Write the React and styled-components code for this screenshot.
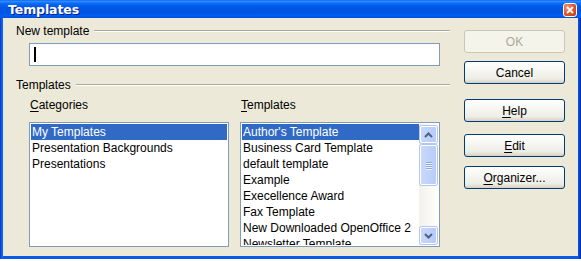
import styled, { createGlobalStyle } from 'styled-components';

const GlobalStyle = createGlobalStyle`
  html, body {
    margin: 0;
    padding: 0;
    background: #ffffff;
  }
  body {
    font-family: "Liberation Sans", Arial, sans-serif;
    font-size: 12px;
  }
`

const Window = styled.div`
  width: 581px;
  height: 259px;
  display: flex;
  flex-direction: column;
  background: linear-gradient(to right, #0831d9 0px, #166aee 2px, #0a5ae8 3px, #0a5ae8 calc(100% - 3px), #0536c4 calc(100% - 1px), #002a9e 100%);
  box-sizing: border-box;
`

const TitleBar = styled.div`
  height: 18px;
  display: flex;
  align-items: center;
  justify-content: space-between;
  padding: 0 4px 0 8px;
  background: linear-gradient(to bottom, #0058ee 0%, #3a93ff 6%, #1c7eff 12%, #0867f5 22%, #0157e6 40%, #0055e5 70%, #005ef2 86%, #004fd8 100%);
`

const TitleText = styled.span`
  color: #ffffff;
  font-family: "DejaVu Sans", Verdana, sans-serif;
  font-weight: bold;
  font-size: 12.5px;
  letter-spacing: -0.1px;
  text-shadow: 1px 1px 0 #0a1e8a;
`

const CloseButton = styled.div`
  width: 14px;
  height: 14px;
  box-sizing: border-box;
  border: 1px solid #ffffff;
  border-radius: 3px;
  background: radial-gradient(circle at 30% 30%, #f29c7c 0%, #e35a30 45%, #c53a10 100%);
  display: flex;
  align-items: center;
  justify-content: center;
  margin-top: 1px;
`

const Client = styled.div`
  flex: 1;
  margin: 0 3px 3px 3px;
  background: #ece9d8;
  display: flex;
  gap: 14px;
  padding: 6px 13px 9px 13px;
`

const Main = styled.div`
  flex: 1;
  display: flex;
  flex-direction: column;
`

const SectionHeader = styled.div`
  display: flex;
  align-items: center;
  gap: 5px;
  height: 14px;
  line-height: 14px;
  color: #000000;
  margin-top: ${p => p.$top || 0}px;

  &::after {
    content: '';
    flex: 1;
    height: 0;
    border-top: 1px solid #aca899;
    border-bottom: 1px solid #ffffff;
    margin-top: -1px;
  }
`

const Indent = styled.div`
  margin: ${p => p.$top || 0}px 10px 0 13px;
`

const TextBox = styled.div`
  height: 23px;
  box-sizing: border-box;
  border: 1px solid #7f9db9;
  background: #ffffff;
  display: flex;
  align-items: center;
  padding-left: 4px;
`

const Caret = styled.span`
  display: block;
  width: 2px;
  height: 15px;
  background: #000000;
`

const Columns = styled.div`
  display: grid;
  grid-template-columns: 200px 200px;
  column-gap: 11px;
`

const Column = styled.div`
  display: flex;
  flex-direction: column;
`

const Label = styled.div`
  height: 14px;
  line-height: 14px;
  margin-top: 6px;
  margin-bottom: 10px;
  padding-left: 1px;

  u {
    text-decoration: underline;
    text-underline-offset: 2px;
  }
`

const ListBox = styled.div`
  height: 125px;
  box-sizing: border-box;
  border: 1px solid #7f9db9;
  background: #ffffff;
  padding: 1px;
  display: flex;
  overflow: hidden;
`

const Rows = styled.div`
  flex: 1;
  overflow: hidden;
`

const Row = styled.div`
  height: 16px;
  line-height: 16px;
  padding-left: 1px;
  white-space: nowrap;
  color: ${p => (p.$selected ? '#ffffff' : '#000000')};
  background: ${p => (p.$selected ? '#316ac5' : 'transparent')};
`

const Scrollbar = styled.div`
  width: 17px;
  display: flex;
  flex-direction: column;
  padding: 1px 1px 1px 1px;
  background: linear-gradient(to right, #f3f1ec, #fefefb);
`

const ScrollButton = styled.div`
  height: 17px;
  box-sizing: border-box;
  border: 1px solid #ffffff;
  border-radius: 2px;
  background: linear-gradient(to right, #c8d7fb, #b7cbf8);
  box-shadow: 0 0 0 1px #b3c6f3;
  display: flex;
  align-items: center;
  justify-content: center;
  margin-top: ${p => p.$top || 0}px;
`

const Thumb = styled.div`
  height: 40px;
  margin-top: 2px;
  box-sizing: border-box;
  border: 1px solid #ffffff;
  border-radius: 2px;
  background: linear-gradient(to right, #c9d8fc, #b8ccf8);
  box-shadow: 0 0 0 1px #b3c6f3;
  display: flex;
  flex-direction: column;
  align-items: center;
  justify-content: center;
  gap: 1px;
`

const Grip = styled.span`
  display: block;
  width: 6px;
  height: 1px;
  background: #8ca4e0;
  box-shadow: 0 1px 0 #eef4fe;
`

const Spacer = styled.div`
  flex: 1;
`

const Side = styled.div`
  width: 101px;
  display: flex;
  flex-direction: column;
`

const Button = styled.div`
  height: 23px;
  box-sizing: border-box;
  margin-top: ${p => p.$top}px;
  border: 1px solid ${p => (p.$disabled ? '#c9c7ba' : '#003c74')};
  border-radius: 3px;
  background: ${p => (p.$disabled
    ? '#f5f4ea'
    : 'linear-gradient(to bottom, #ffffff 0%, #f6f6f2 40%, #eeede5 80%, #d6d0c5 100%)')};
  color: ${p => (p.$disabled ? '#aca899' : '#000000')};
  display: flex;
  align-items: center;
  justify-content: center;
  line-height: 14px;

  u {
    text-decoration: underline;
    text-underline-offset: 2px;
  }
`

const categories = ['My Templates', 'Presentation Backgrounds', 'Presentations'];

const templates = [
  "Author's Template",
  'Business Card Template',
  'default template',
  'Example',
  'Execellence Award',
  'Fax Template',
  'New Downloaded OpenOffice 2',
  'Newsletter Template',
];

const Chevron = ({ up }) => (
  <svg width="9" height="6" viewBox="0 0 9 6">
    <polyline
      points={up ? '1,5 4.5,1.5 8,5' : '1,1 4.5,4.5 8,1'}
      fill="none"
      stroke="#4d6185"
      strokeWidth="2"
    />
  </svg>
)

const App = () => {
  return (
    <>
      <GlobalStyle />
      <Window>
        <TitleBar>
          <TitleText>Templates</TitleText>
          <CloseButton>
            <svg width="8" height="8" viewBox="0 0 8 8">
              <path d="M1 1 L7 7 M7 1 L1 7" stroke="#ffffff" strokeWidth="1.8" />
            </svg>
          </CloseButton>
        </TitleBar>

        <Client>
          <Main>
            <SectionHeader>New template</SectionHeader>
            <Indent $top={5}>
              <TextBox><Caret /></TextBox>
            </Indent>

            <SectionHeader $top={12}>Templates</SectionHeader>
            <Indent>
              <Columns>
                <Column>
                  <Label><u>C</u>ategories</Label>
                  <ListBox>
                    <Rows>
                      {categories.map((c, i) => (
                        <Row key={c} $selected={i === 0}>{c}</Row>
                      ))}
                    </Rows>
                  </ListBox>
                </Column>
                <Column>
                  <Label><u>T</u>emplates</Label>
                  <ListBox>
                    <Rows>
                      {templates.map((t, i) => (
                        <Row key={t} $selected={i === 0}>{t}</Row>
                      ))}
                    </Rows>
                    <Scrollbar>
                      <ScrollButton $top={1}><Chevron up /></ScrollButton>
                      <Thumb>
                        <Grip /><Grip /><Grip /><Grip />
                      </Thumb>
                      <Spacer />
                      <ScrollButton><Chevron /></ScrollButton>
                    </Scrollbar>
                  </ListBox>
                </Column>
              </Columns>
            </Indent>
          </Main>

          <Side>
            <Button $top={6} $disabled>OK</Button>
            <Button $top={8}>Cancel</Button>
            <Button $top={15}><u>H</u>elp</Button>
            <Button $top={12}><u>E</u>dit</Button>
            <Button $top={9}><u>O</u>rganizer...</Button>
          </Side>
        </Client>
      </Window>
    </>
  )
}

export default App;
